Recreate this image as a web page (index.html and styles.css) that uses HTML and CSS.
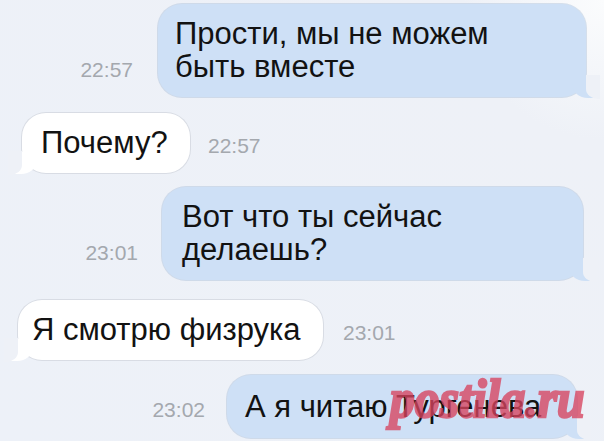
FILE: index.html
```html
<!DOCTYPE html>
<html lang="ru">
<head>
<meta charset="utf-8">
<link rel="stylesheet" href="styles.css">
</head>
<body>
<div class="chat">
  <div class="row out r1">
    <span class="time">22:57</span>
    <div class="bubble blue b1">Прости, мы не можем<br>быть вместе</div>
  </div>
  <div class="row in r2">
    <div class="bubble white b2">Почему?</div>
    <span class="time">22:57</span>
  </div>
  <div class="row out r3">
    <span class="time">23:01</span>
    <div class="bubble blue b3">Вот что ты сейчас<br>делаешь?</div>
  </div>
  <div class="row in r4">
    <div class="bubble white b4">Я смотрю физрука</div>
    <span class="time">23:01</span>
  </div>
  <div class="row out r5">
    <span class="time">23:02</span>
    <div class="bubble blue b5">А я читаю Тургенева</div>
  </div>
  <div class="watermark">postila.ru</div>
</div>
</body>
</html>
```
FILE: styles.css
```css
html, body {
  margin: 0;
  padding: 0;
}
body {
  width: 604px;
  height: 441px;
  overflow: hidden;
  background: radial-gradient(circle at 100% 0, #fbfcfd 0, #eef1f7 140px, #edf1f8 100%);
  font-family: "Liberation Sans", Arial, sans-serif;
  color: #121212;
}
.chat {
  position: relative;
  display: flex;
  flex-direction: column;
  padding-top: 4px;
}
.row {
  display: flex;
  align-items: last baseline;
}
.row.out {
  justify-content: flex-end;
}
.row.in {
  justify-content: flex-start;
}
.time {
  font-size: 21px;
  color: #a4a8ae;
}
.bubble {
  position: relative;
  box-sizing: border-box;
  font-size: 31px;
  line-height: 33px;
  padding: 13px 0 14px 18px;
  border-radius: 24px;
  white-space: nowrap;
}
.bubble.blue {
  background: #cee0f6;
  box-shadow: 0 0 0 1px rgba(150, 175, 205, 0.35);
}
.bubble.white {
  background: #ffffff;
  box-shadow: 0 0 0 1px rgba(190, 195, 205, 0.45);
}
.bubble.blue::before {
  content: "";
  position: absolute;
  right: -8px;
  bottom: -1px;
  width: 22px;
  height: 22px;
  background: #cee0f6;
  border-bottom-left-radius: 16px 14px;
}
.bubble.blue::after {
  content: "";
  position: absolute;
  right: -14px;
  bottom: -2px;
  width: 14px;
  height: 24px;
  background: #eef1f7;
  border-bottom-left-radius: 12px 10px;
}
.bubble.white::before {
  content: "";
  position: absolute;
  left: -7px;
  bottom: -1px;
  width: 22px;
  height: 22px;
  background: #ffffff;
  border-bottom-right-radius: 16px 14px;
}
.bubble.white::after {
  content: "";
  position: absolute;
  left: -14px;
  bottom: -2px;
  width: 14px;
  height: 24px;
  background: #eef1f7;
  border-bottom-right-radius: 12px 10px;
}

/* row 1 */
.r1 { padding-right: 18px; gap: 25px; }
.b1 { width: 428px; padding-left: 17px; }
/* row 2 */
.r2 { margin-top: 16px; padding-left: 22px; gap: 18px; }
.b2 { width: 168px; padding-left: 19px; }
/* row 3 */
.r3 { margin-top: 14px; padding-right: 21px; gap: 24px; }
.b3 { width: 421px; padding-left: 20px; }
/* row 4 */
.r4 { margin-top: 20px; padding-left: 18px; gap: 20px; }
.b4 { width: 305px; padding-left: 14px; }
/* row 5 */
.r5 { margin-top: 15px; padding-right: 27px; gap: 22px; }
.b5 { width: 350px; padding-left: 18px; padding-top: 15px; padding-bottom: 15px; }

.watermark {
  position: absolute;
  left: 390px;
  top: 372px;
  font-family: "Liberation Serif", "Times New Roman", serif;
  font-weight: bold;
  font-style: italic;
  font-size: 54px;
  line-height: 54px;
  color: #d8445f;
  -webkit-text-stroke: 2.5px #d8445f;
  opacity: 0.78;
  transform: scaleX(0.92);
  transform-origin: 0 0;
  white-space: nowrap;
}
```
